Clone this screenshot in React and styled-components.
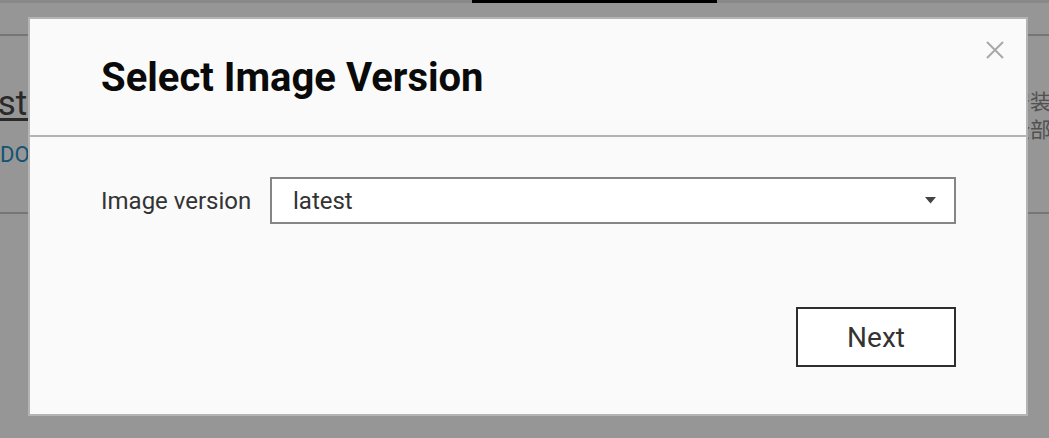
import React from "react";
import styled, { createGlobalStyle } from "styled-components";

const GlobalStyle = createGlobalStyle`
  html, body {
    margin: 0;
    padding: 0;
  }
  body {
    font-family: Roboto, "Noto Sans", "Noto Sans CJK SC", sans-serif;
    background: #ffffff;
  }
`;

const Page = styled.div`
  position: relative;
  width: 100vw;
  height: 100vh;
  overflow: hidden;
  background: #ffffff;
`;

const TopStrip = styled.div`
  height: 3px;
  background: #e9e9e9;
  display: flex;
`;

const ActiveTab = styled.div`
  margin-left: 472px;
  width: 245px;
  background: #000;
`;

const NavBar = styled.div`
  height: 31px;
  border-bottom: 2px solid #c9c9c9;
`;

const Content = styled.div`
  height: 176px;
  display: flex;
  justify-content: space-between;
  border-bottom: 2px solid #c9c9c9;
`;

const LeftCol = styled.div`
  display: flex;
  flex-direction: column;
  align-items: flex-start;
  padding-top: 46px;
  white-space: nowrap;
`;

const PageTitle = styled.a`
  margin-left: -40px;
  font-size: 35px;
  color: #474747;
  text-decoration: underline;
  text-underline-offset: 3px;
  line-height: 44px;
`;

const DocLink = styled.span`
  margin-top: 16px;
  font-size: 22px;
  color: #1f90c6;
  line-height: 26px;
`;

const RightCol = styled.div`
  width: 40px;
  padding-top: 50px;
  font-size: 21px;
  line-height: 28px;
  color: #8a8a8a;
  white-space: nowrap;
  font-family: "Noto Sans CJK SC", sans-serif;
`;

const Overlay = styled.div`
  position: fixed;
  inset: 0;
  background: rgba(0, 0, 0, 0.41);
`;

const Modal = styled.div`
  position: fixed;
  left: 28px;
  top: 17px;
  width: 1000px;
  height: 399px;
  box-sizing: border-box;
  border: 2px solid #b4b4b4;
  background: #fafafa;
  display: flex;
  flex-direction: column;
`;

const Header = styled.div`
  height: 116px;
  display: flex;
  align-items: center;
  padding-left: 71px;
  border-bottom: 2px solid #b3b3b3;
`;

const Title = styled.h2`
  margin: 0;
  font-size: 40px;
  font-weight: 700;
  color: #0a0a0a;
`;

const CloseButton = styled.button`
  position: absolute;
  top: 19px;
  right: 19px;
  width: 24px;
  height: 24px;
  padding: 0;
  border: none;
  background: transparent;
  display: flex;
  align-items: center;
  justify-content: center;
  cursor: pointer;
`;

const Body = styled.div`
  padding: 40px 70px 0 71px;
`;

const FieldRow = styled.div`
  display: flex;
  align-items: center;
`;

const Label = styled.label`
  width: 169px;
  font-size: 24px;
  color: #333;
`;

const SelectBox = styled.div`
  width: 686px;
  height: 47px;
  box-sizing: border-box;
  border: 2px solid #858585;
  background: #fff;
  display: flex;
  align-items: center;
  justify-content: space-between;
  padding: 0 18px 0 21px;
  font-size: 24px;
  color: #333;
`;

const Footer = styled.div`
  margin-top: auto;
  padding: 0 70px 47px 0;
  display: flex;
  justify-content: flex-end;
`;

const NextButton = styled.button`
  width: 160px;
  height: 60px;
  box-sizing: border-box;
  border: 2px solid #2e2e2e;
  background: #fff;
  font-family: Roboto, sans-serif;
  font-size: 28px;
  color: #333;
  cursor: pointer;
`;

const App = () => {
  return (
    <>
      <GlobalStyle />
      <Page>
        <TopStrip>
          <ActiveTab />
        </TopStrip>
        <NavBar />
        <Content>
          <LeftCol>
            <PageTitle>Test Image Deploy</PageTitle>
            <DocLink>DOCUMENTATION</DocLink>
          </LeftCol>
          <RightCol>
            <div>安装</div>
            <div>全部</div>
          </RightCol>
        </Content>
        <Overlay />
        <Modal>
          <CloseButton aria-label="Close">
            <svg width="20" height="20" viewBox="0 0 20 20">
              <path d="M2 2 L18 18 M18 2 L2 18" stroke="#a8a8a8" strokeWidth="2" />
            </svg>
          </CloseButton>
          <Header>
            <Title>Select Image Version</Title>
          </Header>
          <Body>
            <FieldRow>
              <Label>Image version</Label>
              <SelectBox>
                <span>latest</span>
                <svg width="11" height="7" viewBox="0 0 11 7">
                  <path d="M0 0 L11 0 L5.5 6.5 Z" fill="#444" />
                </svg>
              </SelectBox>
            </FieldRow>
          </Body>
          <Footer>
            <NextButton>Next</NextButton>
          </Footer>
        </Modal>
      </Page>
    </>
  );
};

export default App;
